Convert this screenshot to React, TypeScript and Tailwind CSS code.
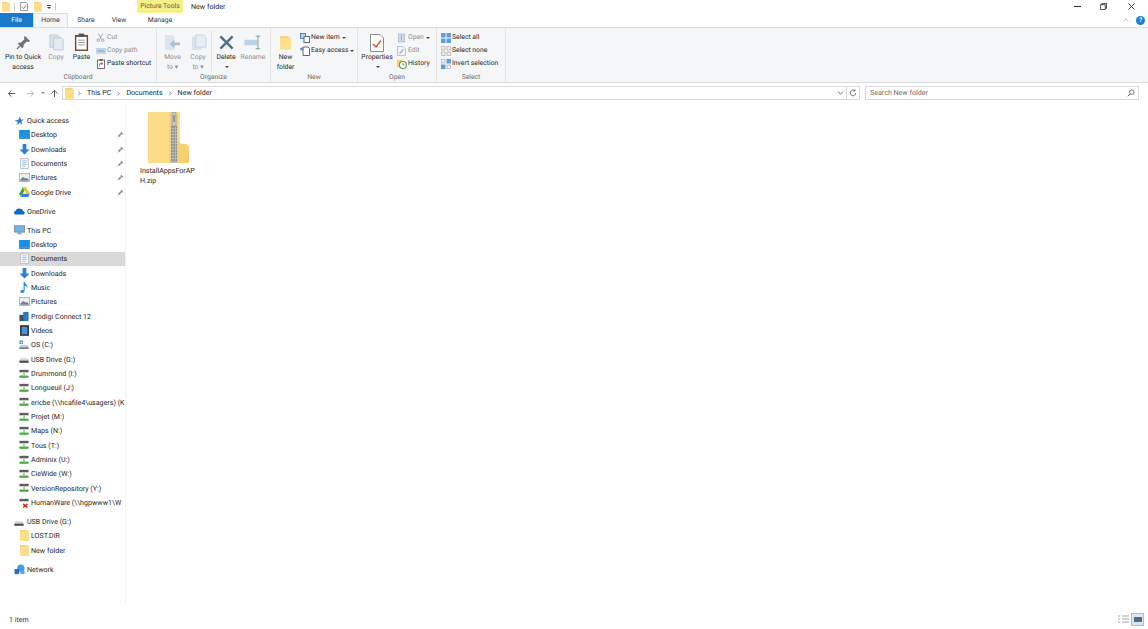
import type { ReactNode } from 'react';

type IconProps = { className?: string };

// folder used by the title bar, the tree and the address bar
function FolderIcon({ className = 'w-[10px] h-[12px]' }: IconProps) {
  return (
    <svg viewBox="0 0 10 12" className={className}>
      <path d="M0 0H8L10 1V12H0Z" fill="#fcdf8d" />
      <path d="M0 0H7V1.5H0Z" fill="#f7cf72" />
    </svg>
  );
}

function PinSmall() {
  return (
    <svg viewBox="0 0 8 8" className="w-[7px] h-[7px]">
      <path d="M4.6 0.6 7.4 3.4 6.6 3.9 5.4 3.6 3.9 5.1 3.8 6.4 3.2 6.8 1.2 4.8 1.6 4.2 2.9 4.1 4.4 2.6 4.1 1.4Z" fill="#8c8c8c" />
      <path d="M2.2 5.8 0.6 7.4" stroke="#8c8c8c" strokeWidth="0.8" />
    </svg>
  );
}

function NetDrive({ bad = false }: { bad?: boolean }) {
  return (
    <svg viewBox="0 0 12 12" className="w-[10px] h-[10px]">
      <rect x="0.5" y="1" width="11" height="2.8" fill="#5e5e5e" />
      <rect x="0.5" y="3.8" width="11" height="1" fill="#c9c9c9" />
      {bad ? (
        <path d="M5 7 10 11.5M10 7 5 11.5" stroke="#d8281c" strokeWidth="1.8" />
      ) : (
        <path d="M6 4.8V8M1 8.4H11V10H1Z" stroke="#4fb04a" strokeWidth="1.2" fill="#4fb04a" />
      )}
    </svg>
  );
}

function UsbDrive() {
  return (
    <svg viewBox="0 0 12 12" className="w-[10px] h-[10px]">
      <path d="M1.5 5H10.5L11.5 8V10.5H0.5V8Z" fill="#d7d7d7" />
      <rect x="0.5" y="8" width="11" height="2.5" fill="#4a4a4a" />
    </svg>
  );
}

const treeIcons: Record<string, ReactNode> = {
  desktop: (
    <svg viewBox="0 0 12 10" className="w-[11px] h-[9px]">
      <rect x="0" y="0" width="12" height="8.5" fill="#1c8fe3" />
      <rect x="0" y="8.5" width="12" height="1.2" fill="#0d5fa6" />
    </svg>
  ),
  downloads: (
    <svg viewBox="0 0 12 12" className="w-[11px] h-[11px]">
      <path d="M4 0H8V6H11.5L6 11.5 0.5 6H4Z" fill="#2b7fd4" />
    </svg>
  ),
  documents: (
    <svg viewBox="0 0 10 12" className="w-[9px] h-[11px]">
      <path d="M0.5 0.5H9.5V11.5H0.5Z" fill="#f4f6f8" stroke="#b9c0c7" />
      <path d="M2.5 3H7.5M2.5 5H7.5M2.5 7H7.5M2.5 9H6" stroke="#9dc2e2" />
    </svg>
  ),
  pictures: (
    <svg viewBox="0 0 12 10" className="w-[11px] h-[9px]">
      <rect x="0.5" y="0.5" width="11" height="9" fill="#eef1f4" stroke="#a9b1b8" />
      <path d="M1.5 7 4.5 4.5 7 6 8.5 5.5 10.5 7V8.5H1.5Z" fill="#6f8396" />
    </svg>
  ),
  google: (
    <svg viewBox="0 0 12 11" className="w-[11px] h-[10px]">
      <path d="M4 0.5H8L6 4 4 7.5 2 11 0 7.5Z" fill="#3aa757" />
      <path d="M4 0.5H8L12 7.5H8Z" fill="#f7c32e" />
      <path d="M4 7.5H12L10 11H2Z" fill="#3b7de8" />
    </svg>
  ),
  onedrive: (
    <svg viewBox="0 0 13 9" className="w-[11px] h-[8px]">
      <path d="M1 8.5C-0.5 7-0.2 5 1.8 4.6 2.4 2.2 5.2 0.6 7.4 2 9.2 1.6 10.6 3 10.6 4.6 12.6 4.8 13.4 7.4 11.6 8.5Z" fill="#0f6cc4" />
    </svg>
  ),
  pc: (
    <svg viewBox="0 0 13 11" className="w-[11px] h-[10px]">
      <rect x="0.5" y="0.5" width="12" height="7.5" fill="#69b6ea" stroke="#7d8a96" />
      <path d="M5 8H8V9.5H10V10.5H3V9.5H5Z" fill="#8f9aa5" />
    </svg>
  ),
  music: (
    <svg viewBox="0 0 10 12" className="w-[9px] h-[11px]">
      <path d="M4 0H5.2C5.4 2.2 9.4 3.4 8.4 7 8 4.8 6.6 4.4 5.2 4V9.6C5.2 11 3.8 12 2.4 12 0.8 12 0 11 0.4 10 0.9 8.8 2.8 8.4 4 8.9Z" fill="#1f8fe6" />
    </svg>
  ),
  prodigi: (
    <svg viewBox="0 0 12 12" className="w-[10px] h-[11px]">
      <rect x="5" y="0.5" width="6.5" height="11" fill="#2a78c8" />
      <rect x="0.5" y="4" width="5" height="7.5" fill="#4a5058" />
    </svg>
  ),
  videos: (
    <svg viewBox="0 0 10 12" className="w-[9px] h-[11px]">
      <rect x="0" y="0" width="10" height="12" fill="#3a4047" />
      <rect x="2" y="2" width="6" height="8" fill="#4a94d6" />
    </svg>
  ),
  os: (
    <svg viewBox="0 0 12 12" className="w-[10px] h-[10px]">
      <path d="M0.5 0.5H2.4V2.4H0.5ZM3 0.5H4.9V2.4H3ZM0.5 3H2.4V4.9H0.5ZM3 3H4.9V4.9H3Z" fill="#1c8fe3" />
      <path d="M1.5 6H10.5L11.5 8.5V10.5H0.5V8.5Z" fill="#c9cdd1" />
      <rect x="0.5" y="9" width="11" height="1.5" fill="#56606a" />
    </svg>
  ),
  usb: <UsbDrive />,
  net: <NetDrive />,
  netbad: <NetDrive bad />,
  folder: <FolderIcon className="w-[9px] h-[11px]" />,
  star: (
    <svg viewBox="0 0 12 12" className="w-[10px] h-[10px]">
      <path d="M7 0.5 8.2 4.2 11.8 4.2 8.9 6.6 10 10.5 7 8.2 3.2 11 4.6 7 0.5 5.6 5.2 4.4Z" fill="#2b7fd4" />
    </svg>
  ),
  network: (
    <svg viewBox="0 0 12 12" className="w-[11px] h-[11px]">
      <circle cx="7.5" cy="4.5" r="4" fill="#3f9be8" />
      <rect x="0.5" y="5.5" width="5" height="5.5" fill="#2b6fbd" />
      <rect x="7" y="7" width="4.5" height="4" fill="#5aa5e2" />
    </svg>
  ),
};

type TreeRow = { label: string; icon: string; pin?: boolean; active?: boolean; top?: boolean };

const quickAccess: TreeRow[] = [
  { label: 'Quick access', icon: 'star', top: true },
  { label: 'Desktop', icon: 'desktop', pin: true },
  { label: 'Downloads', icon: 'downloads', pin: true },
  { label: 'Documents', icon: 'documents', pin: true },
  { label: 'Pictures', icon: 'pictures', pin: true },
  { label: 'Google Drive', icon: 'google', pin: true },
];

const thisPc: TreeRow[] = [
  { label: 'This PC', icon: 'pc', top: true },
  { label: 'Desktop', icon: 'desktop' },
  { label: 'Documents', icon: 'documents', active: true },
  { label: 'Downloads', icon: 'downloads' },
  { label: 'Music', icon: 'music' },
  { label: 'Pictures', icon: 'pictures' },
  { label: 'Prodigi Connect 12', icon: 'prodigi' },
  { label: 'Videos', icon: 'videos' },
  { label: 'OS (C:)', icon: 'os' },
  { label: 'USB Drive (G:)', icon: 'usb' },
  { label: 'Drummond (I:)', icon: 'net' },
  { label: 'Longueuil (J:)', icon: 'net' },
  { label: 'ericbe (\\\\hcafile4\\usagers) (K:', icon: 'net' },
  { label: 'Projet (M:)', icon: 'net' },
  { label: 'Maps (N:)', icon: 'net' },
  { label: 'Tous (T:)', icon: 'net' },
  { label: 'Adminix (U:)', icon: 'net' },
  { label: 'CieWide (W:)', icon: 'net' },
  { label: 'VersionRepository (Y:)', icon: 'net' },
  { label: 'HumanWare (\\\\hgpwww1\\W', icon: 'netbad' },
];

const usbDrive: TreeRow[] = [
  { label: 'USB Drive (G:)', icon: 'usb', top: true },
  { label: 'LOST.DIR', icon: 'folder' },
  { label: 'New folder', icon: 'folder' },
];

function Tree({ rows }: { rows: TreeRow[] }) {
  return (
    <div className="flex flex-col">
      {rows.map((row) => (
        <div key={row.label + row.icon} className={`flex items-center h-[14.33px] pr-[1px] ${row.active ? 'bg-[#d9d9d9]' : ''}`}>
          <span className={`flex justify-center shrink-0 w-[12px] ${row.top ? 'ml-[13px]' : 'ml-[18px]'}`}>{treeIcons[row.icon]}</span>
          <span className={`flex-1 whitespace-nowrap text-[#1f1f1f] ${row.top ? 'ml-[2px]' : 'ml-[1px]'}`}>{row.label}</span>
          {row.pin && <PinSmall />}
        </div>
      ))}
    </div>
  );
}

function Caret() {
  return <span className="inline-block ml-[2px] border-x-[2px] border-t-[2px] border-x-transparent border-t-[#444]" />;
}

function LargeButton({ icon, lines, disabled, w, caret }: { icon: ReactNode; lines: string[]; disabled?: boolean; w: string; caret?: boolean }) {
  return (
    <div className={`flex flex-col items-center shrink-0 pt-[4px] ${w} ${disabled ? 'text-[#8f8f8f]' : 'text-[#262626]'}`}>
      <div className="h-[21px] flex items-center justify-center">{icon}</div>
      {lines.map((l) => (
        <div key={l} className="leading-[9.5px] whitespace-nowrap">{l}</div>
      ))}
      {caret && <div className="flex h-[8px] items-center"><Caret /></div>}
    </div>
  );
}

function SmallButton({ icon, label, disabled, caret }: { icon: ReactNode; label: string; disabled?: boolean; caret?: boolean }) {
  return (
    <div className={`flex items-center h-[13px] whitespace-nowrap ${disabled ? 'text-[#8f8f8f]' : 'text-[#262626]'}`}>
      <span className="w-[11px] flex justify-center mr-[1px]">{icon}</span>
      {label}
      {caret && <Caret />}
    </div>
  );
}

function Group({ label, w, children }: { label: string; w: string; children: ReactNode }) {
  return (
    <div className={`flex flex-col shrink-0 h-full border-r border-[#e2e3e4] ${w}`}>
      <div className="flex h-[44px]">{children}</div>
      <div className="text-center text-[#6d6d6d] h-[10px] leading-[10px]">{label}</div>
    </div>
  );
}

function SmallColumn({ children, ml }: { children: ReactNode; ml: string }) {
  return <div className={`flex flex-col pt-[3px] ${ml}`}>{children}</div>;
}

function Ribbon() {
  return (
    <div className="flex h-[56px] bg-[#f5f6f7] border-y border-[#dadbdc] shrink-0 text-[6.8px]">
      <Group label="Clipboard" w="w-[157px]">
        <LargeButton
          w="w-[46px]"
          lines={['Pin to Quick', 'access']}
          icon={
            <svg viewBox="0 0 16 16" className="w-[15px] h-[15px]">
              <path d="M9.5 1 15 6.5 13.5 7.5 11.5 7 8 10.5 7.8 13 6.6 14 2 9.4 3 8.2 5.5 8 9 4.5 8.5 2.5Z" fill="#6b7178" />
              <path d="M4 12 1 15" stroke="#6b7178" strokeWidth="1.3" />
            </svg>
          }
        />
        <LargeButton
          w="w-[20px]"
          disabled
          lines={['Copy']}
          icon={
            <svg viewBox="0 0 16 18" className="w-[15px] h-[17px]">
              <path d="M1 1H9L11 3V14H1Z" fill="#d9e3ec" stroke="#bccad6" />
              <path d="M5 4H13L15 6V17H5Z" fill="#e3ebf2" stroke="#bccad6" />
            </svg>
          }
        />
        <LargeButton
          w="w-[31px]"
          lines={['Paste']}
          icon={
            <svg viewBox="0 0 16 20" className="w-[15px] h-[19px]">
              <rect x="1" y="2" width="14" height="17" fill="#6d4a35" />
              <rect x="2.5" y="4" width="11" height="13.5" fill="#fff" />
              <rect x="5" y="0.5" width="6" height="3.5" fill="#4c5258" />
              <path d="M4.5 7.5H11.5M4.5 10H11.5M4.5 12.5H11.5" stroke="#8f959b" />
            </svg>
          }
        />
        <SmallColumn ml="ml-[-2px]">
          <SmallButton
            disabled
            label="Cut"
            icon={
              <svg viewBox="0 0 10 10" className="w-[9px] h-[9px]">
                <path d="M2.5 0.5 6 7M7.5 0.5 4 7" stroke="#8fa3b5" />
                <circle cx="2.5" cy="8" r="1.4" fill="none" stroke="#8fa3b5" />
                <circle cx="7.5" cy="8" r="1.4" fill="none" stroke="#8fa3b5" />
              </svg>
            }
          />
          <SmallButton
            disabled
            label="Copy path"
            icon={
              <svg viewBox="0 0 10 6" className="w-[10px] h-[6px]">
                <rect width="10" height="6" fill="#c4d6e6" />
                <path d="M1.5 3H8.5" stroke="#7f98ad" />
              </svg>
            }
          />
          <SmallButton
            label="Paste shortcut"
            icon={
              <svg viewBox="0 0 10 12" className="w-[8px] h-[10px]">
                <rect x="0.5" y="1" width="9" height="10.5" fill="#fff" stroke="#6d4a35" />
                <rect x="3" y="0" width="4" height="2" fill="#4c5258" />
                <path d="M3 9 3.5 5.5H7M5.5 4 7.5 5.5 5.5 7" fill="none" stroke="#2f5f9e" />
              </svg>
            }
          />
        </SmallColumn>
      </Group>
      <Group label="Organize" w="w-[114px]">
        <LargeButton
          w="w-[27px] ml-[2px]"
          disabled
          lines={['Move', 'to \u25BE']}
          icon={
            <svg viewBox="0 0 18 18" className="w-[17px] h-[17px]">
              <path d="M1 1H9L11 3V17H1Z" fill="#dbe5ee" />
              <path d="M17 9H11V6L6 10.5 11 15V12H17Z" fill="#a9bfd3" />
            </svg>
          }
        />
        <LargeButton
          w="w-[24px]"
          disabled
          lines={['Copy', 'to \u25BE']}
          icon={
            <svg viewBox="0 0 18 18" className="w-[17px] h-[17px]">
              <path d="M2 3H10L12 5V17H2Z" fill="#d9e3ec" />
              <path d="M6 1H14L17 4V14H6Z" fill="#e6edf3" stroke="#c5d2dd" />
            </svg>
          }
        />
        <div className="w-px mt-[3px] mb-[1px] ml-[1px] bg-[#e2e3e4]" />
        <LargeButton
          w="w-[28px]"
          caret
          lines={['Delete']}
          icon={
            <svg viewBox="0 0 16 16" className="w-[15px] h-[15px]">
              <path d="M1.5 1.5 14.5 14.5M14.5 1.5 1.5 14.5" stroke="#4f6f8f" strokeWidth="2.6" />
            </svg>
          }
        />
        <LargeButton
          w="w-[26px]"
          disabled
          lines={['Rename']}
          icon={
            <svg viewBox="0 0 20 16" className="w-[18px] h-[15px]">
              <rect x="0.5" y="5" width="14" height="6" fill="#bcd2e4" />
              <path d="M13 1H18M13 15H18M15.5 1V15" stroke="#7d8d9c" />
            </svg>
          }
        />
      </Group>
      <Group label="New" w="w-[87px]">
        <LargeButton
          w="w-[29px]"
          lines={['New', 'folder']}
          icon={<FolderIcon className="w-[11px] h-[16px]" />}
        />
        <SmallColumn ml="ml-[-1px]">
          <SmallButton
            caret
            label="New item"
            icon={
              <svg viewBox="0 0 10 10" className="w-[10px] h-[10px]">
                <rect x="0.5" y="0.5" width="5" height="5" fill="#b9d7f0" stroke="#4a83b8" />
                <rect x="4" y="3.5" width="5.5" height="6" fill="#fff" stroke="#5f6a75" />
              </svg>
            }
          />
          <SmallButton
            caret
            label="Easy access"
            icon={
              <svg viewBox="0 0 10 10" className="w-[10px] h-[10px]">
                <path d="M3 1H8L9.5 2.5V9.5H3Z" fill="#fff" stroke="#5f6a75" />
                <path d="M3.5 3H0.5M2 1.5 0.5 3 2 4.5" fill="none" stroke="#2a6fb5" />
              </svg>
            }
          />
        </SmallColumn>
      </Group>
      <Group label="Open" w="w-[79px]">
        <LargeButton
          w="w-[36px] ml-[1px]"
          caret
          lines={['Properties']}
          icon={
            <svg viewBox="0 0 14 18" className="w-[14px] h-[18px]">
              <path d="M0.5 0.5H10L13.5 4V17.5H0.5Z" fill="#fff" stroke="#8c8c8c" />
              <path d="M3 10 6 13 11 6.5" fill="none" stroke="#d9482b" strokeWidth="1.3" />
            </svg>
          }
        />
        <SmallColumn ml="ml-[1px]">
          <SmallButton
            disabled
            caret
            label="Open"
            icon={
              <svg viewBox="0 0 8 10" className="w-[7px] h-[10px]">
                <rect x="0.5" y="0.5" width="7" height="9" fill="#cfdfec" stroke="#a8bed0" />
                <path d="M4 2V8" stroke="#8ba9c2" />
              </svg>
            }
          />
          <SmallButton
            disabled
            label="Edit"
            icon={
              <svg viewBox="0 0 9 10" className="w-[9px] h-[10px]">
                <path d="M0.5 0.5H6L8.5 3V9.5H0.5Z" fill="#f0f4f7" stroke="#b4c4d1" />
                <path d="M2.5 7.5 6.5 3.5" stroke="#94b2ca" strokeWidth="1.2" />
              </svg>
            }
          />
          <SmallButton
            label="History"
            icon={
              <svg viewBox="0 0 11 11" className="w-[10px] h-[10px]">
                <path d="M0 1H6V9H0Z" fill="#f2cf6e" />
                <circle cx="6.5" cy="6.5" r="3.8" fill="#fff" stroke="#4ea24a" strokeWidth="1.2" />
                <path d="M6.5 4.5V6.5H8.2" fill="none" stroke="#555" strokeWidth="0.8" />
              </svg>
            }
          />
        </SmallColumn>
      </Group>
      <Group label="Select" w="w-[69px]">
        <SmallColumn ml="ml-[3px]">
          <SmallButton
            label="Select all"
            icon={
              <svg viewBox="0 0 10 10" className="w-[10px] h-[10px]">
                <path d="M0 0H4.5V4.5H0ZM5.5 0H10V4.5H5.5ZM0 5.5H4.5V10H0ZM5.5 5.5H10V10H5.5Z" fill="#5b9fdc" />
              </svg>
            }
          />
          <SmallButton
            label="Select none"
            icon={
              <svg viewBox="0 0 10 10" className="w-[10px] h-[10px]">
                <path d="M0.5 0.5H4V4H0.5ZM6 0.5H9.5V4H6ZM0.5 6H4V9.5H0.5ZM6 6H9.5V9.5H6Z" fill="#f3f3f3" stroke="#bdbdbd" />
              </svg>
            }
          />
          <SmallButton
            label="Invert selection"
            icon={
              <svg viewBox="0 0 10 10" className="w-[10px] h-[10px]">
                <path d="M5.5 0H10V4.5H5.5ZM0 5.5H4.5V10H0Z" fill="#5b9fdc" />
                <path d="M0.5 0.5H4V4H0.5ZM6 6H9.5V9.5H6Z" fill="#f3f3f3" stroke="#bdbdbd" />
              </svg>
            }
          />
        </SmallColumn>
      </Group>
    </div>
  );
}

function Arrow({ flip, color }: { flip?: boolean; color: string }) {
  return (
    <svg viewBox="0 0 10 10" className={`w-[9px] h-[9px] ${flip ? 'rotate-180' : ''}`}>
      <path d="M9 5H1.5M5 1.5 1.5 5 5 8.5" fill="none" stroke={color} strokeWidth="1.1" />
    </svg>
  );
}

function Chevron() {
  return (
    <svg viewBox="0 0 4 6" className="w-[3px] h-[5px] text-[#555]">
      <path d="M0.5 0.5 3 3 0.5 5.5" fill="none" stroke="currentColor" />
    </svg>
  );
}

function AddressRow() {
  return (
    <div className="flex items-center h-[20px] shrink-0 pl-[7px] pr-[9px]">
      <Arrow color="#5a5a5a" />
      <span className="ml-[10px]"><Arrow flip color="#bdbdbd" /></span>
      <span className="ml-[6px] border-x-[2px] border-t-[2px] border-x-transparent border-t-[#8a8a8a]" />
      <svg viewBox="0 0 10 10" className="w-[9px] h-[9px] ml-[5px]">
        <path d="M5 9V1.5M1.5 5 5 1.5 8.5 5" fill="none" stroke="#5a5a5a" strokeWidth="1.1" />
      </svg>
      <div className="flex items-center h-[14px] ml-[3px] w-[785px] border border-[#d9d9d9] text-[#1f1f1f]">
        <span className="ml-[2px]"><FolderIcon className="w-[9px] h-[11px]" /></span>
        <span className="ml-[4px]"><Chevron /></span>
        <span className="ml-[6px]">This PC</span>
        <span className="ml-[6px]"><Chevron /></span>
        <span className="ml-[6px]">Documents</span>
        <span className="ml-[6px]"><Chevron /></span>
        <span className="ml-[6px]">New folder</span>
        <svg viewBox="0 0 8 5" className="w-[7px] h-[4px] ml-auto mr-[2px]">
          <path d="M0.5 0.5 4 4 7.5 0.5" fill="none" stroke="#555" />
        </svg>
      </div>
      <div className="flex items-center justify-center h-[14px] w-[13px] border border-l-0 border-[#d9d9d9]">
        <svg viewBox="0 0 10 10" className="w-[8px] h-[8px]">
          <path d="M8.5 5A3.5 3.5 0 1 1 7.2 2.2M7.5 0.5V2.5H5.5" fill="none" stroke="#555" />
        </svg>
      </div>
      <div className="flex items-center h-[14px] ml-[5px] flex-1 border border-[#d9d9d9] pl-[4px] pr-[3px] text-[#6d6d6d]">
        Search New folder
        <svg viewBox="0 0 10 10" className="w-[8px] h-[8px] ml-auto">
          <circle cx="6" cy="4" r="2.8" fill="none" stroke="#555" />
          <path d="M4 6 1 9" stroke="#555" strokeWidth="1.2" />
        </svg>
      </div>
    </div>
  );
}

function ZipIcon() {
  return (
    <svg viewBox="0 0 41 51" className="w-[41px] h-[51px]">
      <path d="M0 0H32V30C32 31 33 32 34 32H38L41 35V51H0Z" fill="#fbdc87" />
      <path d="M32 30C32 31 33 32 34 32H38L41 35V51H29V30Z" fill="#f7d071" />
      <rect x="21" y="0" width="9" height="51" fill="#e9c878" opacity="0.45" />
      <rect x="23" y="14" width="6" height="37" fill="#b4b6b6" />
      <path d="M23 15H29M23 18H29M23 21H29M23 24H29M23 27H29M23 30H29M23 33H29M23 36H29M23 39H29M23 42H29M23 45H29M23 48H29" stroke="#666b70" strokeWidth="1" strokeDasharray="1.5 1" />
      <path d="M24 1C24 0 28 0 28 1V14H24Z" fill="#c9cbcd" stroke="#84888c" strokeWidth="0.6" />
      <rect x="25.2" y="3" width="1.6" height="7" fill="#8a8e92" />
    </svg>
  );
}

export default function App() {
  return (
    <div
      className="w-[1148px] h-[629px] flex flex-col overflow-hidden bg-white text-[7.1px] leading-none [text-rendering:geometricPrecision]"
      style={{ fontFamily: 'Roboto, "Open Sans", sans-serif' }}
    >
      {/* title bar */}
      <div className="flex items-center h-[13px] shrink-0 pl-[2px]">
        <FolderIcon className="w-[8px] h-[10px]" />
        <span className="w-px h-[8px] ml-[4px] bg-[#c9c9c9]" />
        <svg viewBox="0 0 9 10" className="w-[8px] h-[9px] ml-[5px]">
          <path d="M0.5 0.5H7L8.5 2V9.5H0.5Z" fill="#fff" stroke="#8c8c8c" />
          <path d="M2 5.5 4 7.5 7 3.5" fill="none" stroke="#d9482b" />
        </svg>
        <span className="ml-[6px]"><FolderIcon className="w-[8px] h-[10px]" /></span>
        <span className="ml-[5px] flex flex-col gap-[1px] items-center">
          <span className="w-[4px] h-px bg-[#444]" />
          <span className="border-x-[2px] border-t-[2px] border-x-transparent border-t-[#444]" />
        </span>
        <span className="w-px h-[7px] ml-[4px] bg-[#c9c9c9]" />
        <div className="flex items-center justify-center self-stretch w-[46px] ml-[81px] bg-[#f5f08a] text-[#5d5d3a] text-[6.8px]">Picture Tools</div>
        <span className="ml-[8px] text-[#1f1f1f]">New folder</span>
        <div className="ml-auto flex items-center pr-[13px]">
          <span className="w-[7px] h-px bg-[#333]" />
          <svg viewBox="0 0 8 8" className="w-[7px] h-[7px] ml-[19px]">
            <path d="M0.5 2H6V7.5H0.5ZM2 2V0.5H7.5V6H6" fill="none" stroke="#333" />
          </svg>
          <svg viewBox="0 0 8 8" className="w-[7px] h-[7px] ml-[21px]">
            <path d="M0.5 0.5 7.5 7.5M7.5 0.5 0.5 7.5" stroke="#333" />
          </svg>
        </div>
      </div>

      {/* tabs */}
      <div className="flex items-stretch h-[14px] shrink-0 text-[#333] text-[6.8px]">
        <div className="flex items-center justify-center w-[33px] bg-[#1979ca] text-white">File</div>
        <div className="flex items-center justify-center w-[35px] border-x border-t border-[#dadbdc] bg-[#f5f6f7]">Home</div>
        <div className="flex items-center justify-center w-[36px]">Share</div>
        <div className="flex items-center justify-center w-[30px]">View</div>
        <div className="flex items-center justify-center w-[46px] ml-[3px]">Manage</div>
        <div className="ml-auto flex items-center pr-[3px]">
          <svg viewBox="0 0 8 5" className="w-[6px] h-[4px]">
            <path d="M0.5 4.5 4 1 7.5 4.5" fill="none" stroke="#a8a8a8" />
          </svg>
          <span className="flex items-center justify-center w-[9px] h-[9px] ml-[7px] rounded-full bg-[#1a7fd6] text-white text-[6.5px] font-bold">?</span>
        </div>
      </div>

      <Ribbon />
      <AddressRow />

      {/* body */}
      <div className="flex flex-1 min-h-0">
        <div className="w-[125px] shrink-0 flex flex-col gap-[4.7px] pt-[10.5px]">
          <Tree rows={quickAccess} />
          <Tree rows={[{ label: 'OneDrive', icon: 'onedrive', top: true }]} />
          <Tree rows={thisPc} />
          <Tree rows={usbDrive} />
          <Tree rows={[{ label: 'Network', icon: 'network', top: true }]} />
        </div>
        <div className="flex-1 border-l border-[#f3f3f3] pl-[14px] pt-[9px] mb-[6px]">
          <div className="w-[56px] text-[#1f1f1f] leading-[9.5px]">
            <div className="ml-[8px]"><ZipIcon /></div>
            <div className="mt-[3px] break-all">InstallAppsForAPH.zip</div>
          </div>
        </div>
      </div>

      {/* status bar */}
      <div className="flex items-center h-[20px] shrink-0 pl-[9px] pr-[4px] text-[#333]">
        <span className="pt-[1px]">1 item</span>
        <svg viewBox="0 0 11 9" className="w-[11px] h-[9px] ml-auto">
          <path d="M0 1H2M0 4H2M0 7H2M4 1H11M4 4H11M4 7H11" stroke="#c4c4c4" strokeWidth="1.4" />
        </svg>
        <div className="flex items-center justify-center w-[13px] h-[13px] ml-[2px] border border-[#8fc7f2] bg-[#d3e9fb]">
          <span className="w-[8px] h-[5px] bg-[#5b6875]" />
        </div>
      </div>
    </div>
  );
}
